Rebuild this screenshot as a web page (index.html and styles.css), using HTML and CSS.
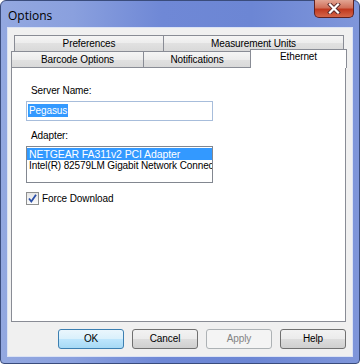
FILE: index.html
```html
<!DOCTYPE html>
<html lang="en">
<head>
    <meta charset="UTF-8">
    <title>Options</title>
    <link rel="stylesheet" href="styles.css">
</head>
<body>
    <div class="window">
        <div class="titlebar">
            <span class="title">Options</span>
            <div class="close">
                <svg width="14" height="11" viewBox="0 0 14 11">
                    <path d="M3 1.5 L11 9.5 M11 1.5 L3 9.5" stroke="#5b2b2b" stroke-width="4" stroke-linecap="square"/>
                    <path d="M3 1.5 L11 9.5 M11 1.5 L3 9.5" stroke="#ffffff" stroke-width="2.2" stroke-linecap="square"/>
                </svg>
            </div>
        </div>
        <div class="client">
            <div class="tab-row back">
                <div class="tab tab-pref">Preferences</div>
                <div class="tab tab-fill">Measurement Units</div>
            </div>
            <div class="tab-row front">
                <div class="tab tab-barcode">Barcode Options</div>
                <div class="tab tab-notif">Notifications</div>
                <div class="tab tab-fill selected">Ethernet</div>
            </div>
            <div class="panel">
                <div class="label">Server Name:</div>
                <div class="textbox"><span class="sel">Pegasus</span></div>
                <div class="label label-gap">Adapter:</div>
                <div class="listbox">
                    <div class="item active">NETGEAR FA311v2 PCI Adapter</div>
                    <div class="item">Intel(R) 82579LM Gigabit Network Connection</div>
                </div>
                <div class="check-row">
                    <span class="checkbox">
                        <svg width="11" height="11" viewBox="0 0 11 11">
                            <path d="M2 5.5 L4.3 8.5 L9 1.8" stroke="#2b4fa8" stroke-width="1.8" fill="none"/>
                        </svg>
                    </span>
                    <span>Force Download</span>
                </div>
            </div>
            <div class="buttons">
                <div class="btn default">OK</div>
                <div class="btn">Cancel</div>
                <div class="btn disabled">Apply</div>
                <div class="btn">Help</div>
            </div>
        </div>
    </div>
</body>
</html>
```

FILE: styles.css
```css
body {
    margin: 0;
    padding: 0;
    background-color: #ffffff;
    font-family: "Liberation Sans", Arial, sans-serif;
    font-size: 10px;
    letter-spacing: -0.1px;
    color: #000;
}
.window {
    width: 360px;
    height: 364px;
    box-sizing: border-box;
    border: 1px solid #3a4c7c;
    border-radius: 6px 6px 4px 4px;
    background: linear-gradient(to right, #93a8e0, #8aa0de 20%, #6f88d6 45%, #6c86d4 70%, #7f96da);
    padding: 0 6px 6px 6px;
    display: flex;
    flex-direction: column;
}
.titlebar {
    height: 26px;
    display: flex;
    align-items: flex-start;
    justify-content: space-between;
}
.title {
    font-family: "Open Sans", "Noto Sans", sans-serif;
    font-size: 12px;
    letter-spacing: 0;
    margin: 6px 0 0 1px;
    color: #000;
}
.close {
    width: 40px;
    height: 18px;
    margin-top: -1px;
    margin-right: -1px;
    box-sizing: border-box;
    border: 1px solid #5e2222;
    border-top: none;
    border-radius: 0 0 5px 5px;
    background: linear-gradient(#e2a593, #d0705a 45%, #c0391f 55%, #d4664a);
    display: flex;
    align-items: center;
    justify-content: center;
}
.client {
    flex: 1;
    background-color: #f0f0f0;
    border: 1px solid #dbe3f4;
    padding: 7px 6px 0 3px;
    display: flex;
    flex-direction: column;
}
.tab-row {
    display: flex;
    height: 16px;
}
.tab-row.back {
    margin: 0 2px 0 3px;
}
.tab {
    box-sizing: border-box;
    height: 16px;
    border: 1px solid #898c95;
    border-bottom: none;
    background: linear-gradient(#f5f5f5, #ececec 50%, #e1e1e1 50%, #d9d9d9);
    text-align: center;
    line-height: 16px;
}
.tab + .tab {
    margin-left: -1px;
}
.tab-pref {
    width: 150px;
}
.tab-barcode {
    width: 133px;
}
.tab-notif {
    width: 108px;
}
.tab-fill {
    flex: 1;
}
.tab.selected {
    background: #ffffff;
    height: 19px;
    margin-top: -2px;
    margin-right: -1px;
    line-height: 14px;
    position: relative;
    z-index: 1;
}
.panel {
    height: 255px;
    box-sizing: border-box;
    background-color: #ffffff;
    border: 1px solid #898c95;
    padding: 17px 0 0 14px;
}
.label {
    margin-left: 5px;
    line-height: 12px;
}
.label-gap {
    margin-top: 9px;
}
.textbox {
    width: 187px;
    height: 20px;
    box-sizing: border-box;
    margin-top: 4px;
    border: 1px solid #a7bddb;
    padding: 2px 1px;
    line-height: 14px;
}
.sel {
    background-color: #3399ff;
    color: #fff;
    padding: 1px 1px;
}
.listbox {
    width: 187px;
    height: 37px;
    box-sizing: border-box;
    margin-top: 4px;
    border: 1px solid #828790;
    padding: 1px 0;
    overflow: hidden;
}
.item {
    height: 12px;
    line-height: 12px;
    padding-left: 2px;
    white-space: nowrap;
    overflow: hidden;
}
.item.active {
    background-color: #3399ff;
    color: #fff;
    font-size: 10.5px;
}
.check-row {
    margin-top: 9px;
    display: flex;
    align-items: center;
    gap: 3px;
}
.checkbox {
    width: 13px;
    height: 13px;
    box-sizing: border-box;
    border: 1px solid #8e8f8f;
    background: linear-gradient(#e6e6e6, #fbfbfb);
    display: flex;
    align-items: center;
    justify-content: center;
}
.buttons {
    display: flex;
    justify-content: flex-end;
    gap: 8px;
    margin-top: 7px;
}
.btn {
    width: 66px;
    height: 20px;
    box-sizing: border-box;
    border: 1px solid #707070;
    border-radius: 3px;
    background: linear-gradient(#f2f2f2, #ebebeb 50%, #dddddd 50%, #cfcfcf);
    text-align: center;
    line-height: 18px;
}
.btn.default {
    border-color: #3c7fb1;
    background: linear-gradient(#eaf6fd, #d9f0fc 50%, #bee6fd 50%, #a7d9f5);
}
.btn.disabled {
    border-color: #adb2b5;
    background: #f4f4f4;
    color: #838383;
}
```
